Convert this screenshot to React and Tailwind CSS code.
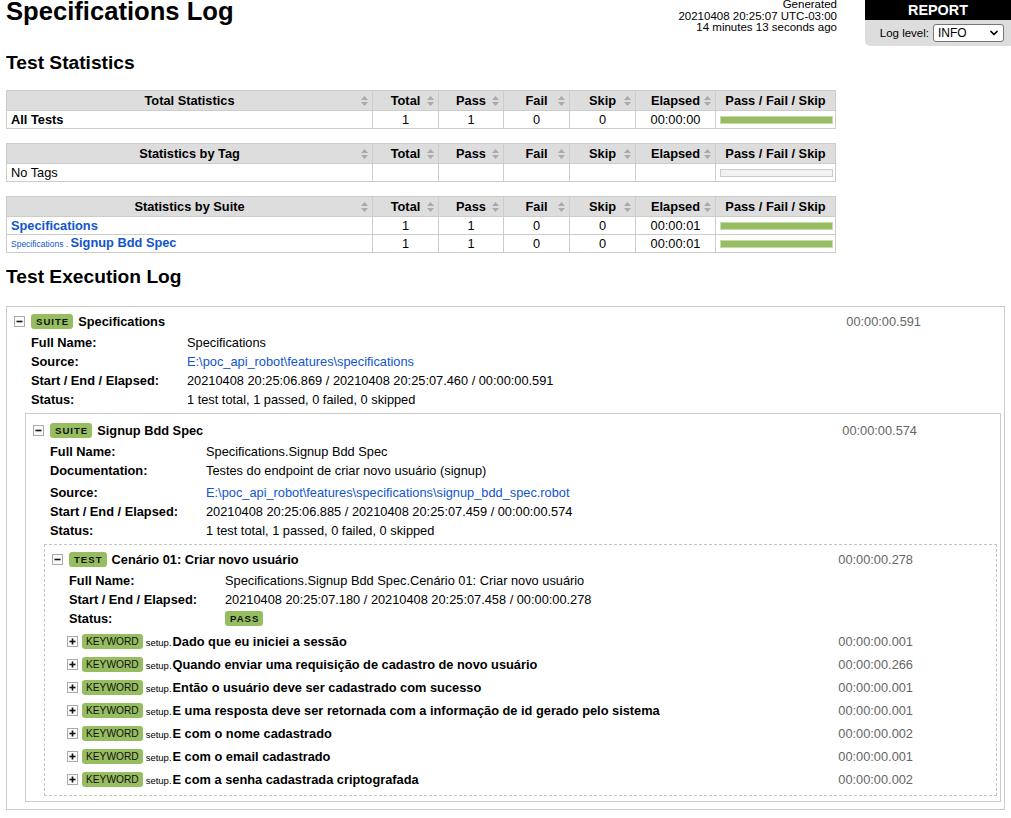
import { ChevronDown } from "lucide-react";

const cols = [366, 66, 65, 66, 66, 80, 120];

function SortIcon() {
  return (
    <svg className="absolute right-[4px] top-1/2 -translate-y-1/2" width="7" height="10" viewBox="0 0 7 10">
      <path d="M0 4 L3.5 0 L7 4 Z M0 6 L7 6 L3.5 10 Z" fill="#aaa" />
    </svg>
  );
}

function Bar({ empty }) {
  return (
    <div
      className={
        empty
          ? "ml-[4px] mr-[2px] h-[8px] border border-[#ccc] bg-[#f2f2f2]"
          : "ml-[4px] mr-[2px] h-[8px] border border-[#c8d8b0] bg-[#97bd61]"
      }
    />
  );
}

function StatTable({ title, rows, className = "" }) {
  const heads = ["Total", "Pass", "Fail", "Skip", "Elapsed"];
  return (
    <table className={`w-[830px] table-fixed border-collapse leading-[15px] ${className}`}>
      <colgroup>
        {cols.map((w, i) => (
          <col key={i} style={{ width: w }} />
        ))}
      </colgroup>
      <thead>
        <tr className="bg-[#ddd]">
          <th className="relative h-[20px] border border-[#ccc] p-0 font-bold">
            {title}
            <SortIcon />
          </th>
          {heads.map((h) => (
            <th key={h} className="relative h-[20px] border border-[#ccc] p-0 font-bold">
              {h}
              <SortIcon />
            </th>
          ))}
          <th className="h-[20px] border border-[#ccc] p-0 font-bold">Pass / Fail / Skip</th>
        </tr>
      </thead>
      <tbody>
        {rows.map((r, i) => (
          <tr key={i}>
            <td className="h-[18px] border border-[#ccc] p-0 pl-[4px] text-left">{r.name}</td>
            {r.nums.map((n, j) => (
              <td key={j} className="h-[18px] border border-[#ccc] p-0 text-center">
                {n}
              </td>
            ))}
            <td className="h-[18px] border border-[#ccc] p-0">
              <Bar empty={r.empty} />
            </td>
          </tr>
        ))}
      </tbody>
    </table>
  );
}

function Toggle({ open }) {
  return (
    <span className="inline-flex h-[11px] w-[11px] shrink-0 items-center justify-center border border-[#aaa] bg-[#fafafa]">
      <svg width="7" height="7" viewBox="0 0 7 7">
        <path d="M0.5 3.5H6.5" stroke="#111" strokeWidth="1.6" />
        {!open && <path d="M3.5 0.5V6.5" stroke="#111" strokeWidth="1.6" />}
      </svg>
    </span>
  );
}

function Badge({ children, spaced }) {
  return (
    <span
      className={
        spaced
          ? "inline-block h-[15px] shrink-0 rounded-[3px] bg-[#97bd61] pl-[5px] pr-[4px] text-[9.6px] font-bold leading-[16px] tracking-[1px] text-[#111]"
          : "inline-block h-[15px] shrink-0 rounded-[3px] bg-[#97bd61] px-[4px] text-[10.2px] leading-[16px] text-[#111]"
      }
    >
      {children}
    </span>
  );
}

function Header({ kind, name, elapsed }) {
  return (
    <div className="flex h-[20px] items-center">
      <Toggle open />
      <span className="ml-[6px] flex">
        <Badge spaced>{kind}</Badge>
      </span>
      <span className="ml-[5px] font-bold">{name}</span>
      <span className="ml-auto mr-[80px] text-[#666]">{elapsed}</span>
    </div>
  );
}

function Meta({ rows }) {
  return (
    <div className="ml-[17px] mt-[2px]">
      {rows.map(([k, v, tall]) => (
        <div key={k} className={tall ? "flex h-[22px] items-start leading-[19px]" : "flex h-[19px] items-center"}>
          <div className="w-[156px] shrink-0 font-bold">{k}</div>
          <div className="flex">{v}</div>
        </div>
      ))}
    </div>
  );
}

const link = "text-[#1155cc]";

const keywords = [
  ["Dado que eu iniciei a sessão", "00:00:00.001"],
  ["Quando enviar uma requisição de cadastro de novo usuário", "00:00:00.266"],
  ["Então o usuário deve ser cadastrado com sucesso", "00:00:00.001"],
  ["E uma resposta deve ser retornada com a informação de id gerado pelo sistema", "00:00:00.001"],
  ["E com o nome cadastrado", "00:00:00.002"],
  ["E com o email cadastrado", "00:00:00.001"],
  ["E com a senha cadastrada criptografada", "00:00:00.002"],
];

export default function App() {
  return (
    <div className="min-h-[818px] bg-white font-['Liberation_Sans',Arial,Helvetica,sans-serif] text-[12.8px] leading-[normal] text-black">
      <div className="flex">
        <div className="flex w-[837px] justify-between pl-[6px]">
          <h1 className="-mt-[2px] text-[25.6px] font-bold leading-[26px]">Specifications Log</h1>
          <div className="-mt-[1px] text-right text-[11.5px] leading-[11.5px]">
            Generated
            <br />
            20210408 20:25:07 UTC-03:00
            <br />
            14 minutes 13 seconds ago
          </div>
        </div>
        <div className="ml-auto w-[146px]">
          <div className="flex h-[20px] items-center justify-center bg-black text-[14.4px] font-bold text-white">
            REPORT
          </div>
          <div className="flex h-[26px] items-center justify-end gap-[4px] rounded-bl-[5px] bg-[#ddd] pr-[7px] text-[11.5px]">
            <span>Log level:</span>
            <div className="flex h-[18px] w-[71px] items-center justify-between rounded-[3px] border border-[#767676] bg-white pl-[4px] pr-[3px] text-[12px]">
              <span>INFO</span>
              <ChevronDown size={12} strokeWidth={3.5} />
            </div>
          </div>
        </div>
      </div>

      <h2 className="ml-[6px] mt-[6px] text-[19.2px] font-bold leading-[22px]">Test Statistics</h2>

      <div className="ml-[6px] mt-[16px]">
        <StatTable
          title="Total Statistics"
          rows={[{ name: <b>All Tests</b>, nums: [1, 1, 0, 0, "00:00:00"] }]}
        />
        <StatTable
          className="mt-[14px]"
          title="Statistics by Tag"
          rows={[{ name: "No Tags", nums: ["", "", "", "", ""], empty: true }]}
        />
        <StatTable
          className="mt-[14px]"
          title="Statistics by Suite"
          rows={[
            { name: <b className={link}>Specifications</b>, nums: [1, 1, 0, 0, "00:00:01"] },
            {
              name: (
                <span className={link}>
                  <span className="text-[8.5px]">Specifications . </span>
                  <b>Signup Bdd Spec</b>
                </span>
              ),
              nums: [1, 1, 0, 0, "00:00:01"],
            },
          ]}
        />
      </div>

      <h2 className="ml-[6px] mt-[13px] text-[19.2px] font-bold leading-[22px]">Test Execution Log</h2>

      <div className="mx-[6px] mt-[18px] border border-[#ccc] pb-[7px] pl-[7px] pr-[3px] pt-[4px]">
        <Header kind="SUITE" name="Specifications" elapsed="00:00:00.591" />
        <Meta
          rows={[
            ["Full Name:", "Specifications"],
            ["Source:", <span className={link}>E:\poc_api_robot\features\specifications</span>],
            ["Start / End / Elapsed:", "20210408 20:25:06.869 / 20210408 20:25:07.460 / 00:00:00.591"],
            ["Status:", "1 test total, 1 passed, 0 failed, 0 skipped"],
          ]}
        />

        <div className="ml-[11px] mt-[4px] border border-[#ccc] pb-[5px] pl-[7px] pr-[3px] pt-[6px]">
          <Header kind="SUITE" name="Signup Bdd Spec" elapsed="00:00:00.574" />
          <Meta
            rows={[
              ["Full Name:", "Specifications.Signup Bdd Spec"],
              ["Documentation:", "Testes do endpoint de criar novo usuário (signup)", true],
              [
                "Source:",
                <span className={link}>E:\poc_api_robot\features\specifications\signup_bdd_spec.robot</span>,
              ],
              ["Start / End / Elapsed:", "20210408 20:25:06.885 / 20210408 20:25:07.459 / 00:00:00.574"],
              ["Status:", "1 test total, 1 passed, 0 failed, 0 skipped"],
            ]}
          />

          <div className="ml-[11px] mt-[4px] border border-dashed border-[#c4c4c4] pb-[4px] pl-[7px] pr-[3px] pt-[4px]">
            <Header kind="TEST" name="Cenário 01: Criar novo usuário" elapsed="00:00:00.278" />
            <Meta
              rows={[
                ["Full Name:", "Specifications.Signup Bdd Spec.Cenário 01: Criar novo usuário"],
                ["Start / End / Elapsed:", "20210408 20:25:07.180 / 20210408 20:25:07.458 / 00:00:00.278"],
                ["Status:", <Badge spaced>PASS</Badge>],
              ]}
            />
            <div className="ml-[15px] mt-[2px]">
              {keywords.map(([name, el]) => (
                <div key={name} className="flex h-[23px] items-center">
                  <Toggle />
                  <span className="ml-[4px] flex">
                    <Badge>KEYWORD</Badge>
                  </span>
                  <span className="ml-[3px]">
                    <span className="mr-[1px] text-[9.5px]">setup.</span>
                    <b>{name}</b>
                  </span>
                  <span className="ml-auto mr-[80px] text-[#666]">{el}</span>
                </div>
              ))}
            </div>
          </div>
        </div>
      </div>
    </div>
  );
}
